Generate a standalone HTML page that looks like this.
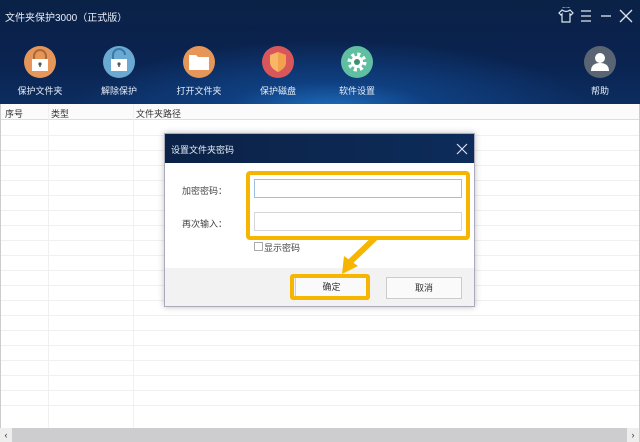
<!DOCTYPE html><html><head><meta charset="utf-8"><style>
*{margin:0;padding:0;box-sizing:border-box}
body{width:640px;height:442px;overflow:hidden;position:relative;background:#fff;font-family:"Liberation Sans","Noto Sans CJK SC",sans-serif;font-size:9px;color:#333}
.hdr{position:absolute;left:0;top:0;width:640px;height:104px;background:radial-gradient(ellipse 260px 70px at 330px 110px,#1f6fc0 0%,#0f3f80 40%,rgba(8,30,70,0) 100%),linear-gradient(180deg,#0b2247 0%,#0a2350 60%,#0c2d60 100%)}
.t{position:absolute;color:#e8eef8}
.ic{position:absolute;width:32px;height:32px;border-radius:50%}
.lb{position:absolute;color:#e8eef8;font-size:9px;width:70px;text-align:center}
.grid{position:absolute;left:0;top:104px;width:640px;height:324px;background:#fff;border-left:1px solid #ccc;border-right:1px solid #ccc}
.row{position:absolute;left:0;width:638px;height:1px;background:#f0f0f0}
.col{position:absolute;top:0;width:1px;height:324px;background:#f0f0f0}
.dlg{position:absolute;left:164px;top:133px;width:311px;height:174px;background:#fff;border:1px solid #aab;box-shadow:0 0 6px rgba(0,0,0,.25)}
.inp{position:absolute;left:89px;width:208px;height:19px;border:1px solid #d6d6d6;background:#fff}
</style></head><body>
<div class="hdr"></div>
<div class="t" style="left:5px;top:9px;font-size:10px">文件夹保护3000（正式版）</div>
<div class="t" style="left:558px;top:6px;font-size:13px">👕</div>
<svg style="position:absolute;left:558px;top:8px" width="80" height="16"><rect x="0" y="0" width="16" height="16" fill="#0b2247"/><path d="M4 2 L1 5 L3 7 L4 6 V14 H12 V6 L13 7 L15 5 L12 2 Q8 5 4 2Z" fill="none" stroke="#dfe6f0" stroke-width="1.2"/><path d="M23 3H33M23 8H33M23 13H33" stroke="#dfe6f0" stroke-width="1.3"/><path d="M43 8H53" stroke="#dfe6f0" stroke-width="1.3"/><path d="M62 2L74 14M74 2L62 14" stroke="#dfe6f0" stroke-width="1.3"/></svg>
<div class="ic" style="left:24px;top:46px;background:#e7965a"></div>
<svg style="position:absolute;left:28px;top:48px" width="24" height="26"><path d="M6 11V8a6 6 0 0 1 12 0v3" fill="none" stroke="#a96a3a" stroke-width="2"/><rect x="4" y="11" width="16" height="12" fill="#fff"/><circle cx="12" cy="16" r="1.6" fill="#555"/><rect x="11.3" y="16" width="1.4" height="3" fill="#555"/></svg>
<div class="lb" style="left:5px;top:84px">保护文件夹</div>
<div class="ic" style="left:103px;top:46px;background:#6aa9d2"></div>
<svg style="position:absolute;left:107px;top:48px" width="24" height="26"><path d="M6 11V7a6 6 0 0 1 12 0" fill="none" stroke="#3c78a8" stroke-width="2"/><rect x="4" y="11" width="16" height="12" fill="#fff"/><circle cx="12" cy="16" r="1.6" fill="#555"/><rect x="11.3" y="16" width="1.4" height="3" fill="#555"/></svg>
<div class="lb" style="left:84px;top:84px">解除保护</div>
<div class="ic" style="left:183px;top:46px;background:#e7965a"></div>
<svg style="position:absolute;left:188px;top:53px" width="22" height="18"><path d="M1 2H8L10 4H21V17H1Z" fill="#fff"/></svg>
<div class="lb" style="left:164px;top:84px">打开文件夹</div>
<div class="ic" style="left:262px;top:46px;background:#d9575a"></div>
<svg style="position:absolute;left:268px;top:51px" width="20" height="22"><path d="M10 1L18 4V11C18 16 14 19 10 21C6 19 2 16 2 11V4Z" fill="#f7b766"/><path d="M10 1L18 4V11C18 16 14 19 10 21Z" fill="#f2a24c"/></svg>
<div class="lb" style="left:243px;top:84px">保护磁盘</div>
<div class="ic" style="left:341px;top:46px;background:#5fbfa0"></div>
<svg style="position:absolute;left:345px;top:50px" width="24" height="24"><circle cx="12" cy="12" r="7.5" fill="none" stroke="#fff" stroke-width="4" stroke-dasharray="3 2.9"/><circle cx="12" cy="12" r="6" fill="#fff"/><circle cx="12" cy="12" r="3" fill="#3f8f70"/></svg>
<div class="lb" style="left:322px;top:84px">软件设置</div>
<div class="ic" style="left:584px;top:46px;background:#5b6473"></div>
<svg style="position:absolute;left:588px;top:49px" width="24" height="26"><circle cx="12" cy="9" r="5" fill="#fff"/><path d="M3 22C3 16 7 14 12 14C17 14 21 16 21 22Z" fill="#fff"/></svg>
<div class="lb" style="left:565px;top:84px">帮助</div>
<div class="grid">
<div style="position:absolute;left:0;top:0;width:638px;height:16px;border-bottom:1px solid #ddd;background:#fbfbfb"></div>
<div class="t" style="color:#333;left:4px;top:3px">序号</div><div class="t" style="color:#333;left:50px;top:3px">类型</div><div class="t" style="color:#333;left:135px;top:3px">文件夹路径</div>
<div class="col" style="left:47px"></div><div class="col" style="left:132px"></div>
<div class="row" style="top:31px"></div><div class="row" style="top:46px"></div><div class="row" style="top:61px"></div><div class="row" style="top:76px"></div><div class="row" style="top:91px"></div><div class="row" style="top:106px"></div><div class="row" style="top:121px"></div><div class="row" style="top:136px"></div><div class="row" style="top:151px"></div><div class="row" style="top:166px"></div><div class="row" style="top:181px"></div><div class="row" style="top:196px"></div><div class="row" style="top:211px"></div><div class="row" style="top:226px"></div><div class="row" style="top:241px"></div><div class="row" style="top:256px"></div><div class="row" style="top:271px"></div><div class="row" style="top:286px"></div><div class="row" style="top:301px"></div>
</div>
<div style="position:absolute;left:0;top:428px;width:640px;height:14px;background:#cdcdd0"></div>
<div style="position:absolute;left:0;top:428px;width:12px;height:14px;background:#eee;font-size:9px;text-align:center;line-height:14px">‹</div>
<div style="position:absolute;left:627px;top:428px;width:12px;height:14px;background:#eee;font-size:9px;text-align:center;line-height:14px">›</div>
<div class="dlg">
<div style="position:absolute;left:0;top:0;width:309px;height:29px;background:linear-gradient(90deg,#0b2247,#0d2c5a)"></div>
<div class="t" style="left:6px;top:9px">设置文件夹密码</div>
<svg style="position:absolute;left:291px;top:9px" width="12" height="12"><path d="M1 1L11 11M11 1L1 11" stroke="#dde" stroke-width="1.2"/></svg>
<div style="position:absolute;left:17px;top:50px;color:#444">加密密码：</div>
<div style="position:absolute;left:17px;top:83px;color:#444">再次输入：</div>
<div class="inp" style="top:45px;border-color:#9cc0df"></div>
<div class="inp" style="top:78px"></div>
<div style="position:absolute;left:89px;top:108px;width:9px;height:9px;border:1px solid #aaa"></div>
<div style="position:absolute;left:99px;top:107px;color:#444">显示密码</div>
<div style="position:absolute;left:0;top:134px;width:309px;height:38px;background:#f2f2f2"></div>
<div style="position:absolute;left:130px;top:143px;width:73px;height:21px;background:#fafafa;border:1px solid #ccc;text-align:center;line-height:19px;color:#333">确定</div>
<div style="position:absolute;left:221px;top:143px;width:76px;height:22px;background:#fafafa;border:1px solid #ccc;text-align:center;line-height:20px;color:#333">取消</div>
</div>
<div style="position:absolute;left:246px;top:171px;width:224px;height:69px;border:4px solid #f6b500;border-radius:4px"></div>
<div style="position:absolute;left:290px;top:274px;width:80px;height:26px;border:4px solid #f6b500;border-radius:3px"></div>
<svg style="position:absolute;left:330px;top:236px" width="50" height="42"><path d="M44 3L20 26" stroke="#f6b500" stroke-width="6" stroke-linecap="round"/><path d="M12 38L14 20L28 30Z" fill="#f6b500"/></svg>
</body></html>
